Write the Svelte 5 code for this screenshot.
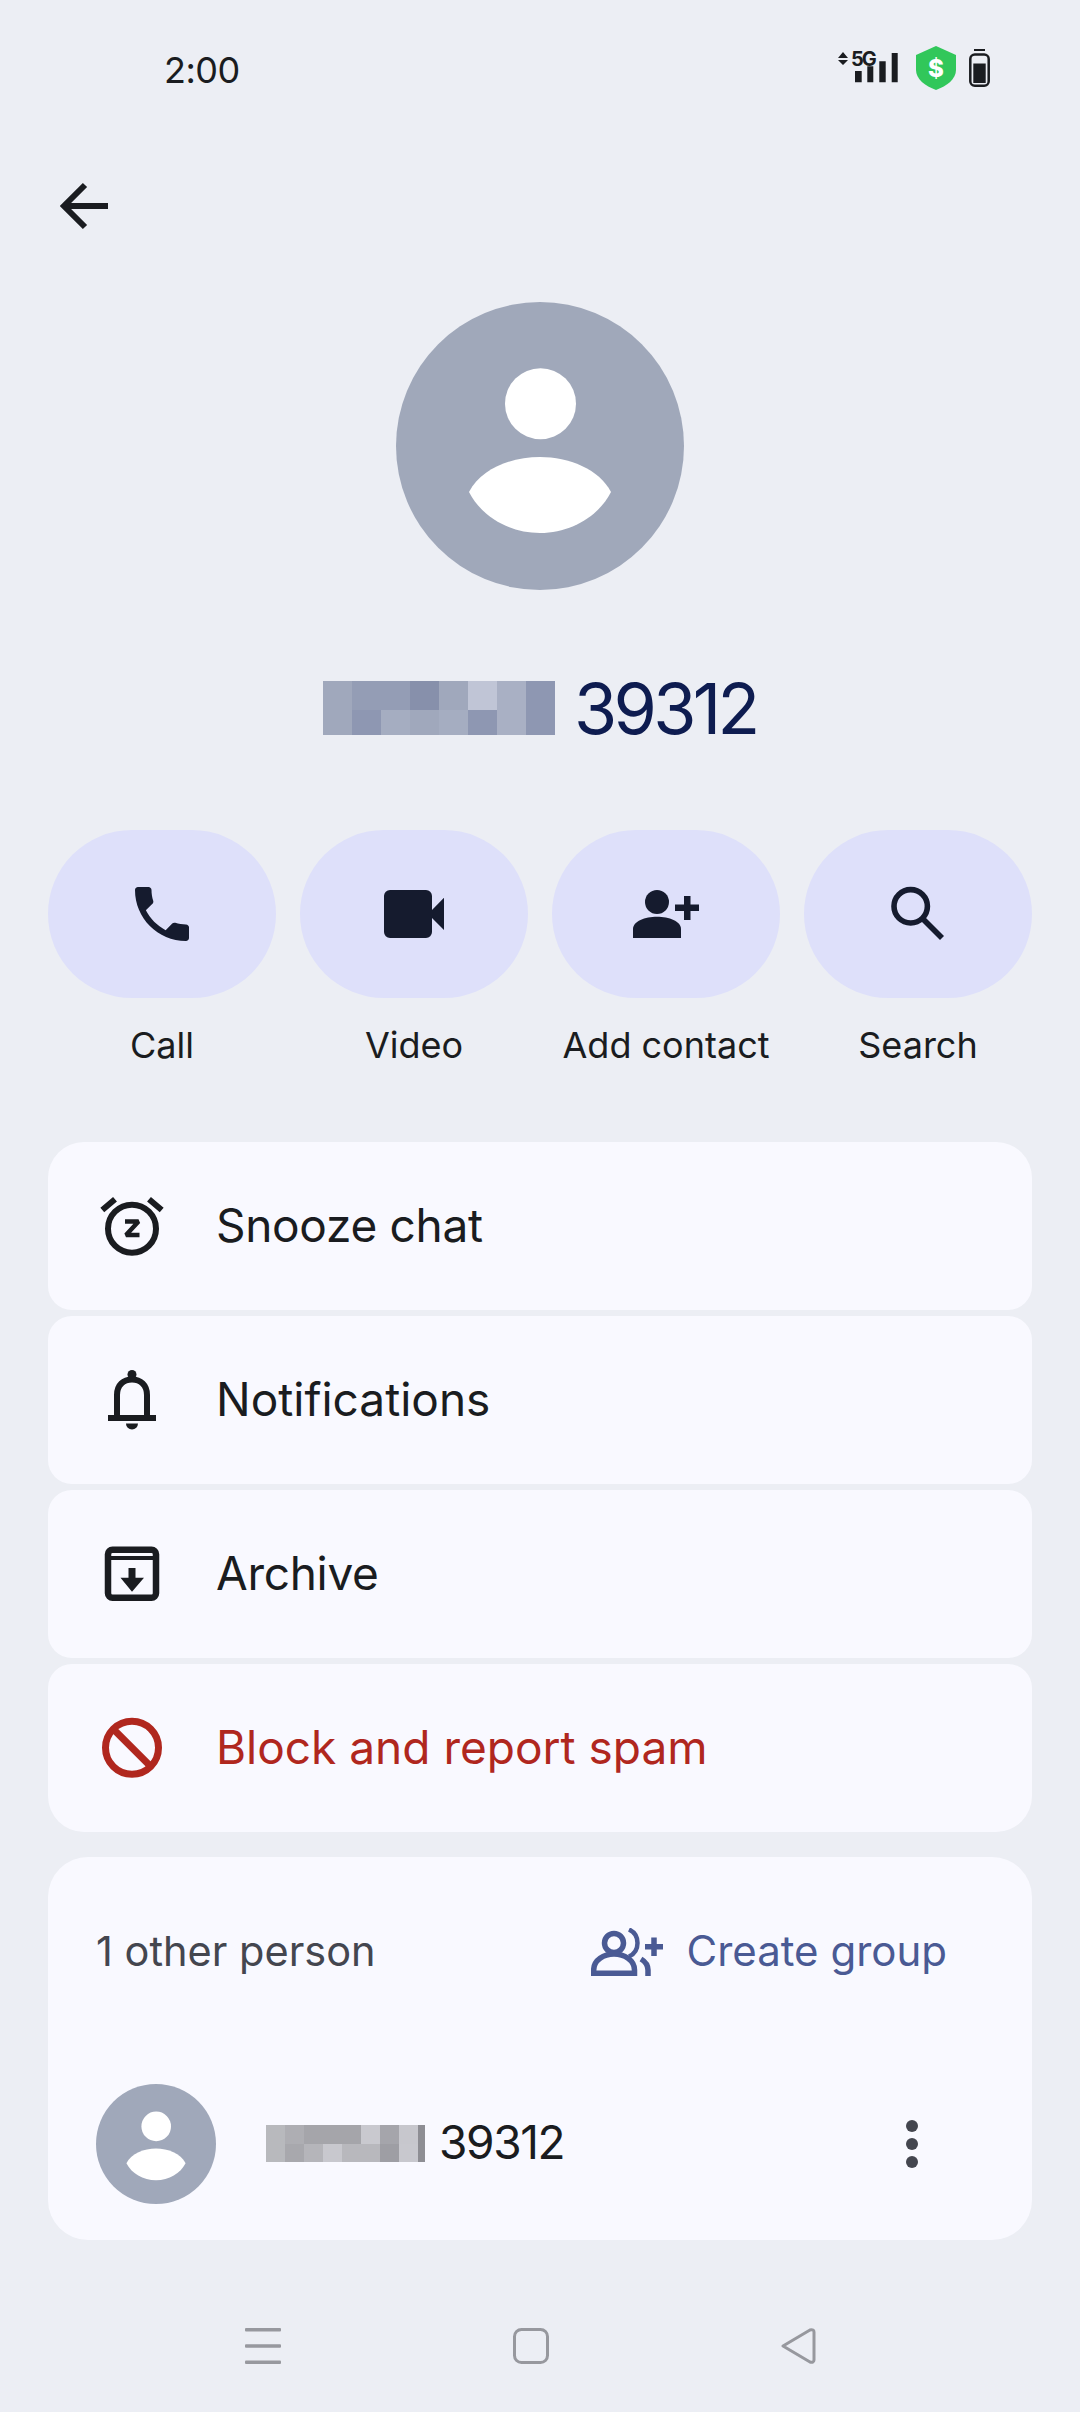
<script>
  const bigPixels = [
    "#a0a8bc", "#949db5", "#949db5", "#8790ab", "#a0a8bc", "#c0c5d6", "#a9b0c4", "#8e97b2",
    "#a0a8bc", "#8e97b2", "#a5adc1", "#a0a8bc", "#a5adc1", "#8e97b2", "#a9b0c4", "#8e97b2",
  ];
  const smallPixels = [
    "#b8b9bd", "#aeaeb3", "#a5a5aa", "#a5a5aa", "#a5a5aa", "#c9c9cf", "#a5a5ab", "#c7c7cd", "#8e8e94",
    "#b8b9bd", "#a8a8ad", "#b5b5ba", "#c8c8ce", "#b8b8bd", "#b8b8bd", "#9e9ea4", "#c8c8ce", "#8e8e94",
  ];
</script>

{#snippet avatar(size)}
  <svg class="avatar" width={size} height={size} viewBox="0 0 288 288">
    <circle cx="144" cy="144" r="144" fill="#a0a8ba" />
    <circle cx="144.5" cy="101.7" r="35.5" fill="#fff" />
    <path d="M73 190C85 167 115 155 144 155S203 167 215 190C203 214 175 231 144 231S85 214 73 190Z" fill="#fff" />
  </svg>
{/snippet}

<div class="screen">
  <div class="status">
    <span class="time">2:00</span>
    <div class="status-icons">
      <div class="signal">
        <svg width="60" height="32" viewBox="0 0 60 32">
          <path d="M0 6 5 0 10 6ZM0 8 5 13 10 8Z" fill="#1a1c20" />
          <path d="M17 19h6.700v11.300H17ZM29.300 14.300h6v16h-6ZM41.300 9.300h6.400v21h-6.400ZM53.700 1h6v29.300h-6Z" fill="#1a1c20" />
        </svg>
        <span class="fiveg">5G</span>
      </div>
      <div class="shield">
        <svg width="40" height="44" viewBox="0 0 40 44">
          <path d="M20 0 40 9V24C40 33 31 40 20 44 9 40 0 33 0 24V9Z" fill="#31c75a" />
        </svg>
        <span class="dollar">$</span>
      </div>
      <svg width="21" height="38" viewBox="0 0 21 38">
        <rect x="5" y="0" width="11" height="2" fill="#1a1c20" />
        <rect x="1.300" y="5.500" width="18.400" height="31.200" rx="4.500" fill="none" stroke="#1a1c20" stroke-width="2.500" />
        <rect x="4.300" y="14.500" width="12.400" height="19.500" fill="#1a1c20" />
      </svg>
    </div>
  </div>

  <div class="topbar">
    <svg width="72" height="72" viewBox="0 0 72 72" fill="none" stroke="#1a1c20" stroke-width="6">
      <path d="M60 36H17M37 15 16 36 37 57" />
    </svg>
  </div>

  <div class="profile">
    {@render avatar(288)}
    <div class="name">
      <div class="pixels big">
        {#each bigPixels as c}
          <span style="background: {c}"></span>
        {/each}
      </div>
      <span>39312</span>
    </div>
  </div>

  <div class="actions">
    <div class="action">
      <div class="pill">
        <svg width="72" height="72" viewBox="0 0 24 24" fill="#151b2e">
          <path d="M6.620 10.790c1.440 2.830 3.760 5.140 6.590 6.590l2.200-2.200c.27-.27.67-.36 1.020-.24 1.120.37 2.330.57 3.570.57.55 0 1 .45 1 1V20c0 .55-.45 1-1 1-9.390 0-17-7.610-17-17 0-.55.45-1 1-1h3.500c.55 0 1 .45 1 1 0 1.250.2 2.450.57 3.570.11.35.03.74-.25 1.020l-2.200 2.200z" />
        </svg>
      </div>
      <span>Call</span>
    </div>
    <div class="action">
      <div class="pill">
        <svg width="72" height="72" viewBox="0 0 72 72" fill="#151b2e">
          <path d="M12 12H48a6 6 0 0 1 6 6V32L66 19.700V52L54 40V54a6 6 0 0 1-6 6H12a6 6 0 0 1-6-6V18a6 6 0 0 1 6-6Z" />
        </svg>
      </div>
      <span>Video</span>
    </div>
    <div class="action">
      <div class="pill">
        <svg width="72" height="72" viewBox="0 0 72 72" fill="#151b2e">
          <circle cx="27" cy="24" r="12" />
          <path d="M3 60V51C3 43 15 38.700 27 38.700S51 43 51 51V60Z" />
          <path d="M54 18h6.500v8.500H69v6.500H60.500v9H54v-9H45V26.500h9Z" />
        </svg>
      </div>
      <span>Add contact</span>
    </div>
    <div class="action">
      <div class="pill">
        <svg width="72" height="72" viewBox="0 0 72 72" fill="none" stroke="#151b2e" stroke-width="5.600">
          <circle cx="28.700" cy="28.300" r="16.700" />
          <path d="M41 41 60 60" />
        </svg>
      </div>
      <span>Search</span>
    </div>
  </div>

  <div class="menu">
    <div class="item">
      <svg width="72" height="72" viewBox="0 0 72 72" fill="none" stroke="#1a1c20" stroke-width="6">
        <circle cx="36" cy="38.700" r="24" />
        <path d="M6.300 20 19 9.300M65.700 20 53 9.300" />
        <path d="M29 31.500H42.500L30 45H43.500" stroke-width="4.500" stroke-linejoin="bevel" />
      </svg>
      <span class="tight">Snooze chat</span>
    </div>
    <div class="item">
      <svg width="72" height="72" viewBox="0 0 72 72" fill="#1a1c20">
        <circle cx="36" cy="10.500" r="4.500" />
        <path d="M21 54V31C21 21 27.500 15.500 36 15.500S51 21 51 31V54" fill="none" stroke="#1a1c20" stroke-width="6" />
        <rect x="12" y="51" width="48" height="6" />
        <path d="M30 59.500H42A6 6 0 0 1 30 59.500Z" />
      </svg>
      <span>Notifications</span>
    </div>
    <div class="item">
      <svg width="72" height="72" viewBox="0 0 72 72" fill="#1a1c20">
        <rect x="12" y="11.700" width="48" height="48" rx="4.500" fill="none" stroke="#1a1c20" stroke-width="6.500" />
        <rect x="12" y="18" width="48" height="4" />
        <path d="M32.500 30H39.500V39.700H48L36 53.700 24.500 39.700H32.500Z" />
      </svg>
      <span class="tight">Archive</span>
    </div>
    <div class="item danger">
      <svg width="72" height="72" viewBox="0 0 72 72" fill="none" stroke="#b0271e" stroke-width="7">
        <circle cx="36" cy="35.700" r="26.500" />
        <path d="M18 17.700 54 53.700" />
      </svg>
      <span>Block and report spam</span>
    </div>
  </div>

  <div class="people">
    <div class="people-head">
      <span class="count">1 other person</span>
      <div class="create">
        <svg width="72" height="48" viewBox="0 0 72 48" fill="none" stroke="#4a5a94" stroke-width="5.500">
          <circle cx="23" cy="15" r="9.500" />
          <path d="M2.700 45.200V42C2.700 32 13 26 23 26S43.500 32 43.500 42V45.200Z" />
          <path d="M38 1.500C43.500 4 46.500 9 46.500 15S43.500 26 38 28.500" stroke-width="4.500" />
          <path d="M50 31C55 34 57 38 57 42V48" />
          <path d="M63 9.500V28M54 18.700H72" />
        </svg>
        <span>Create group</span>
      </div>
    </div>
    <div class="person">
      {@render avatar(120)}
      <div class="pixels small">
        {#each smallPixels as c}
          <span style="background: {c}"></span>
        {/each}
      </div>
      <span class="number">39312</span>
      <svg class="more" width="72" height="72" viewBox="0 0 72 72" fill="#44464f">
        <circle cx="36" cy="18" r="6" />
        <circle cx="36" cy="36" r="6" />
        <circle cx="36" cy="54" r="6" />
      </svg>
    </div>
  </div>

  <div class="nav">
    <svg width="36" height="36" viewBox="0 0 36 36" fill="#97989e">
      <rect y="0" width="36" height="3.500" rx="1" />
      <rect y="16.200" width="36" height="3.500" rx="1" />
      <rect y="32.500" width="36" height="3.500" rx="1" />
    </svg>
    <svg width="36" height="36" viewBox="0 0 36 36" fill="none" stroke="#97989e" stroke-width="3">
      <rect x="1.500" y="1.500" width="33" height="33" rx="7" />
    </svg>
    <svg width="36" height="36" viewBox="0 0 36 36" fill="none" stroke="#97989e" stroke-width="3" stroke-linejoin="round">
      <path d="M2 18 29 2C31.500 1 33 2.500 33 4V32C33 33.500 31.500 35 29 34Z" />
    </svg>
  </div>
</div>

<style>
  :global(body) {
    margin: 0;
    background: #eceef4;
  }

  .screen {
    width: 1080px;
    height: 2412px;
    overflow: hidden;
    background: #eceef4;
    color: #1a1c20;
    font-family: Inter, "Noto Sans", sans-serif;
  }

  svg {
    display: block;
    flex: none;
  }

  .status {
    height: 136px;
    padding: 0 90px 0 164px;
    display: flex;
    align-items: center;
    justify-content: space-between;
  }

  .time {
    padding-top: 3px;
    font-size: 36px;
    letter-spacing: -0.5px;
  }

  .status-icons {
    display: flex;
    align-items: center;
    gap: 13px;
  }

  .signal {
    position: relative;
    margin-right: 5px;
  }

  .fiveg {
    position: absolute;
    left: 13px;
    top: -3px;
    font-size: 20px;
    line-height: 20px;
    font-weight: 700;
    letter-spacing: -2px;
  }

  .shield {
    position: relative;
  }

  .dollar {
    position: absolute;
    inset: 0;
    display: flex;
    align-items: center;
    justify-content: center;
    color: #fff;
    font-size: 24px;
    font-weight: 800;
  }

  .topbar {
    height: 166px;
    box-sizing: border-box;
    padding: 34px 0 0 48px;
  }

  .profile {
    display: flex;
    flex-direction: column;
    align-items: center;
  }

  .name {
    margin-top: 82px;
    height: 72px;
    display: flex;
    align-items: center;
    gap: 18.500px;
    color: #0e1c50;
    font-size: 70px;
    letter-spacing: -3.700px;
  }

  .pixels {
    display: grid;
  }

  .pixels.big {
    grid-template-columns: repeat(8, 29px);
    grid-template-rows: 29px 25px;
  }

  .pixels.small {
    grid-template-columns: repeat(8, 19px) 7px;
    grid-template-rows: 18.500px 18px;
  }

  .actions {
    margin-top: 86px;
    padding: 0 48px;
    display: grid;
    grid-template-columns: repeat(4, 228px);
    gap: 24px;
  }

  .action {
    display: flex;
    flex-direction: column;
    align-items: center;
    gap: 25px;
    font-size: 36px;
    line-height: 44px;
  }

  .pill {
    width: 228px;
    height: 168px;
    border-radius: 84px;
    background: #dee0fa;
    display: flex;
    align-items: center;
    justify-content: center;
  }

  .menu {
    margin: 75px 48px 0;
    display: flex;
    flex-direction: column;
    gap: 6px;
  }

  .item {
    height: 168px;
    padding-left: 48px;
    display: flex;
    align-items: center;
    gap: 48px;
    border-radius: 24px;
    background: #f9f9ff;
    font-size: 46px;
  }

  .item span {
    margin-bottom: 3px;
  }

  .item .tight {
    letter-spacing: -0.3px;
  }

  .item:first-child {
    border-radius: 36px 36px 24px 24px;
  }

  .item:last-child {
    border-radius: 24px 24px 36px 36px;
  }

  .danger {
    color: #b0271e;
  }

  .people {
    margin: 25px 48px 0;
    border-radius: 40px;
    background: #f9f9ff;
  }

  .people-head {
    height: 190px;
    padding: 0 85px 0 48px;
    display: flex;
    align-items: center;
    justify-content: space-between;
  }

  .count {
    margin-bottom: 3px;
    font-size: 41.500px;
    color: #44464f;
  }

  .create {
    display: flex;
    align-items: center;
    gap: 23px;
    color: #4a5a94;
    font-size: 42px;
  }

  .create span {
    margin-bottom: 3px;
  }

  .person {
    height: 193px;
    padding: 0 84px 0 48px;
    display: flex;
    align-items: center;
  }

  .person .avatar {
    margin-right: 50px;
  }

  .number {
    margin: 0 0 3px 14px;
    font-size: 46px;
    letter-spacing: -1.400px;
  }

  .more {
    margin-left: auto;
  }

  .nav {
    margin-top: 88px;
    padding-left: 245px;
    display: flex;
    gap: 232px;
  }
</style>
